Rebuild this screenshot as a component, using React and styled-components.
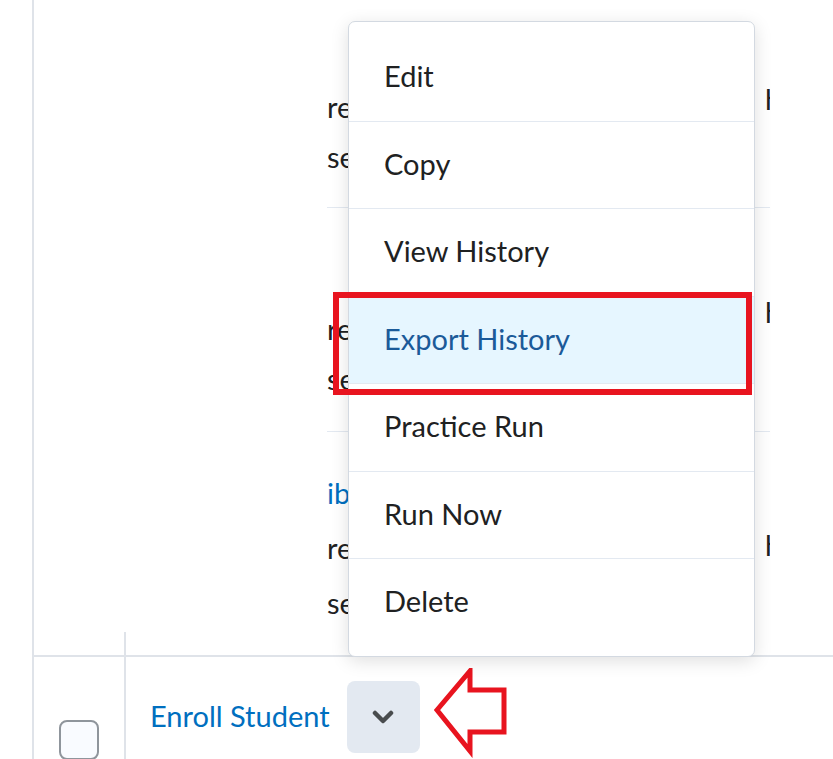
import React from "react";
import styled, { createGlobalStyle } from "styled-components";

const Global = createGlobalStyle`
  html, body { margin: 0; padding: 0; background: #fff; }
  body { font-family: Lato, "Open Sans", sans-serif; color: #202122; overflow: hidden; }
`;

const Page = styled.div`
  position: relative;
  width: 833px;
  height: 759px;
  overflow: hidden;
  background: #fff;
`;

const Table = styled.div`
  margin-left: 32px;
  border-left: 2px solid #dfe3e9;
  height: 759px;
  display: flex;
  flex-direction: column;
`;

const TopRows = styled.div`
  display: grid;
  grid-template-columns: 293px 436px 7px;
  grid-template-rows: 208px 224px 223px;
`;

const Spacer = styled.div``;

const MainCell = styled.div`
  border-bottom: ${(p) => (p.$last ? "none" : "1px solid #e3e9f1")};
  display: flex;
  flex-direction: column;
  padding-top: ${(p) => p.$pt}px;
  font-size: 29px;
  white-space: nowrap;
  overflow: hidden;
`;

const Line = styled.div`
  height: ${(p) => p.$h || 52}px;
  line-height: ${(p) => p.$h || 52}px;
  color: ${(p) => (p.$link ? "#006fbf" : "#202122")};
`;

const EdgeCell = styled.div`
  border-bottom: ${(p) => (p.$last ? "none" : "1px solid #e3e9f1")};
  overflow: hidden;
  padding-left: 2px;
  padding-top: ${(p) => p.$pt}px;
  font-size: 29px;
  white-space: nowrap;
`;

const BottomRow = styled.div`
  border-top: 2px solid #dfe3e9;
  display: grid;
  grid-template-columns: 92px 1fr;
  flex: 1;
`;

const CheckCell = styled.div`
  border-right: 2px solid #dfe3e9;
  padding: 63px 0 0 25px;
  position: relative;
  &::after {
    content: "";
    position: absolute;
    right: -2px;
    top: -25px;
    height: 23px;
    border-right: 2px solid #dfe3e9;
  }
`;

const Checkbox = styled.div`
  width: 36px;
  height: 36px;
  border: 2px solid #8f959c;
  border-radius: 8px;
  background: #f9fbff;
`;

const NameCell = styled.div`
  display: flex;
  align-items: flex-start;
  padding: 24px 0 0 24px;
  gap: 17px;
`;

const Link = styled.span`
  color: #006fbf;
  font-size: 29px;
  line-height: 70px;
`;

const DropButton = styled.div`
  width: 73px;
  height: 72px;
  border-radius: 8px;
  background: #e3e9f1;
  display: flex;
  align-items: center;
  justify-content: center;
`;

const Arrow = styled.svg`
  margin-top: -13px;
  margin-left: -3px;
`;

const Menu = styled.div`
  position: absolute;
  left: 348px;
  top: 21px;
  width: 405px;
  border: 1px solid #d3d9e1;
  border-radius: 7px;
  background: #fff;
  box-shadow: 0 4px 18px rgba(0, 0, 0, 0.13);
  padding: 11px 0 10px;
`;

const Item = styled.div`
  height: ${(p) => (p.$first ? 87.5 : 86.5)}px;
  box-sizing: border-box;
  display: flex;
  align-items: center;
  padding: 0 0 3px 35px;
  font-size: 29px;
  color: ${(p) => (p.$active ? "#1b5a99" : "#202122")};
  background: ${(p) => (p.$active ? "#e6f6ff" : "#fff")};
  border-top: ${(p) => (p.$first ? "none" : "1px solid #e3e9f1")};
  ${(p) => (p.$first ? "" : "height: 87.5px;")}
`;

const Highlight = styled.div`
  position: absolute;
  left: 333px;
  top: 292px;
  width: 407px;
  height: 91px;
  border: 6px solid #e8141f;
`;

const items = ["Edit", "Copy", "View History", "Export History", "Practice Run", "Run Now", "Delete"];

export default function App() {
  return (
    <Page>
      <Global />
      <Table>
        <TopRows>
          <Spacer />
          <MainCell $pt={30}>
            <Line $h={52} />
            <Line $h={50}>retention</Line>
            <Line $h={50}>session</Line>
          </MainCell>
          <EdgeCell $pt={81}>h</EdgeCell>
          <Spacer />
          <MainCell $pt={36}>
            <Line $h={60} />
            <Line $h={50}>retention</Line>
            <Line $h={50}>session</Line>
          </MainCell>
          <EdgeCell $pt={86}>h</EdgeCell>
          <Spacer />
          <MainCell $pt={35} $last>
            <Line $h={52} $link>ibrary</Line>
            <Line $h={58}>retention</Line>
            <Line $h={52}>session</Line>
          </MainCell>
          <EdgeCell $pt={95} $last>h</EdgeCell>
        </TopRows>
        <BottomRow>
          <CheckCell>
            <Checkbox />
          </CheckCell>
          <NameCell>
            <Link>Enroll Student</Link>
            <DropButton>
              <svg width="22" height="14" viewBox="0 0 22 14">
                <path d="M3 3 L11 11 L19 3" fill="none" stroke="#494c4e" strokeWidth="4.5" strokeLinecap="round" strokeLinejoin="round" />
              </svg>
            </DropButton>
            <Arrow width="76" height="90" viewBox="0 0 76 90">
              <path d="M3 42 L36 3 L36 22 L70 22 L70 64 L36 64 L36 83 Z" fill="none" stroke="#e8141f" strokeWidth="5" strokeLinejoin="miter" />
            </Arrow>
          </NameCell>
        </BottomRow>
      </Table>
      <Menu>
        {items.map((t, i) => (
          <Item key={t} $first={i === 0} $active={t === "Export History"}>
            {t}
          </Item>
        ))}
      </Menu>
      <Highlight />
    </Page>
  );
}
